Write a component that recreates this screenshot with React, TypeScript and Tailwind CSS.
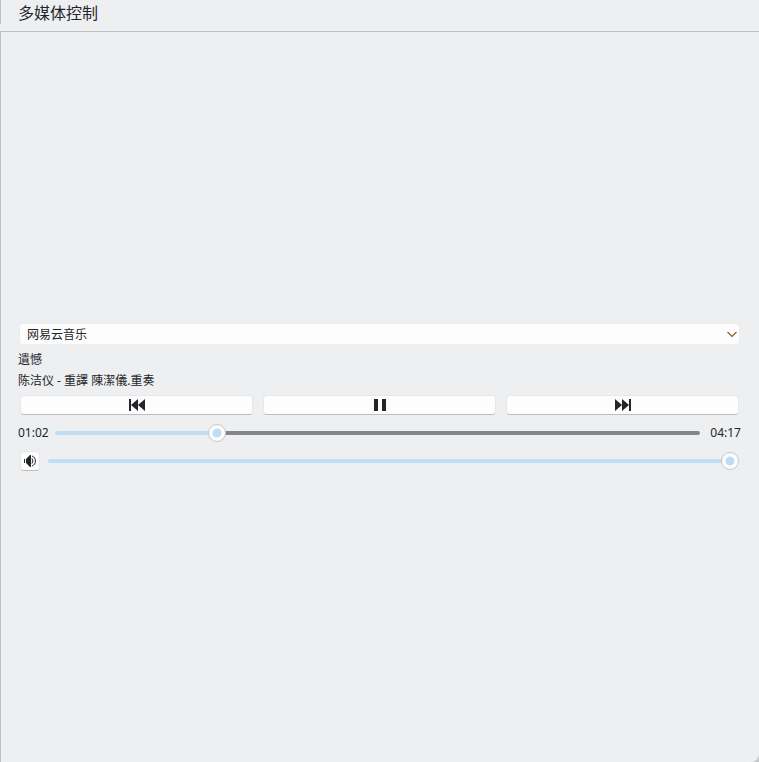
import { useState } from "react";

const DURATION = 257000;

const sliderClass =
  "h-[18px] min-w-0 flex-1 cursor-pointer appearance-none bg-transparent outline-none " +
  "[&::-webkit-slider-runnable-track]:h-1 [&::-webkit-slider-runnable-track]:rounded-xs [&::-webkit-slider-runnable-track]:[background:var(--track)] " +
  "[&::-webkit-slider-thumb]:-mt-[7px] [&::-webkit-slider-thumb]:size-[18px] [&::-webkit-slider-thumb]:appearance-none [&::-webkit-slider-thumb]:rounded-full " +
  "[&::-webkit-slider-thumb]:border [&::-webkit-slider-thumb]:border-[#c8c8ca] " +
  "[&::-webkit-slider-thumb]:bg-[radial-gradient(circle,#c0dcf3_4px,#fdfdfd_5px)]";

const buttonClass =
  "flex h-5 items-center justify-center rounded-sm border border-[#e6e7e9] border-b-[#bcbcbc] bg-[#fdfdfd] text-[#232629]";

function formatTime(ms: number) {
  const total = Math.floor(ms / 1000);
  const minutes = String(Math.floor(total / 60)).padStart(2, "0");
  const seconds = String(total % 60).padStart(2, "0");
  return `${minutes}:${seconds}`;
}

type SliderProps = {
  label: string;
  value: number;
  max: number;
  onChange: (value: number) => void;
};

function Slider({ label, value, max, onChange }: SliderProps) {
  const percent = (value / max) * 100;
  const track = `linear-gradient(to right, #c0dff5 ${percent}%, #868686 ${percent}%)`;

  return (
    <input
      type="range"
      aria-label={label}
      min={0}
      max={max}
      value={value}
      onChange={(e) => onChange(Number(e.target.value))}
      className={sliderClass}
      style={{ "--track": track } as React.CSSProperties}
    />
  );
}

function PreviousIcon() {
  return (
    <svg width="16" height="12" viewBox="0 0 16 12" fill="currentColor" aria-hidden="true">
      <path d="M0 0h2v12H0zM9 0v12L2 6zM16 0v12L9 6z" />
    </svg>
  );
}

function NextIcon() {
  return (
    <svg width="16" height="12" viewBox="0 0 16 12" fill="currentColor" aria-hidden="true">
      <path d="M14 0h2v12h-2zM0 0v12l7-6zM7 0v12l7-6z" />
    </svg>
  );
}

function PauseIcon() {
  return (
    <svg width="12" height="12" viewBox="0 0 12 12" fill="currentColor" aria-hidden="true">
      <path d="M0 0h4v12H0zM8 0h4v12H8z" />
    </svg>
  );
}

function VolumeIcon() {
  return (
    <svg width="12" height="12" viewBox="0 0 12 12" fill="none" aria-hidden="true">
      <path d="M0 4h1v4H0zM2 4l4-4h1v12H6L2 8z" fill="currentColor" />
      <path d="M8 3.5q1.8 2.5 0 5" stroke="currentColor" />
      <path d="M8 1c4.600 1.500 4.600 8.500 0 10" stroke="currentColor" />
    </svg>
  );
}

export default function App() {
  const [player, setPlayer] = useState("netease");
  const [position, setPosition] = useState(62700);
  const [volume, setVolume] = useState(100);

  return (
    <div className="bg-[#c6c7ca]">
      <div className="flex min-h-screen flex-col rounded-br-lg bg-[#eeeff1] font-['Noto_Sans','Noto_Sans_CJK_SC',sans-serif] text-xs text-[#232629]">
        <header className="mb-[7px] flex h-6 items-end border-l border-[#bfc0c5] px-[17px]">
          <h1 className="text-base leading-[22px]">多媒体控制</h1>
        </header>

        <main className="flex flex-1 flex-col justify-center rounded-br-lg border-t border-l border-[#bfc0c5] pr-[18px] pl-[17px]">
          <div className="relative mx-px">
            <select
              aria-label="播放器"
              value={player}
              onChange={(e) => setPlayer(e.target.value)}
              className="block h-[22px] w-full appearance-none rounded-sm border border-[#ebecee] bg-[#fdfdfd] px-[7px] pt-0.5 leading-[18px]"
            >
              <option value="netease">网易云音乐</option>
            </select>
            <svg
              className="pointer-events-none absolute top-2 right-[3px] text-[#8a5a2b]"
              width="10"
              height="7"
              viewBox="0 0 10 7"
              fill="none"
              aria-hidden="true"
            >
              <path d="M.5 1 5 5.500 9.500 1" stroke="currentColor" strokeWidth="1.200" />
            </svg>
          </div>

          <div className="my-1 leading-[21px]">
            <p>遺憾</p>
            <p>陈洁仪 - 重譯 陳潔儀.重奏</p>
          </div>

          <div className="mx-0.5 grid grid-cols-3 gap-2.5">
            <button type="button" aria-label="上一首" className={buttonClass}>
              <PreviousIcon />
            </button>
            <button type="button" aria-label="暂停" className={buttonClass}>
              <PauseIcon />
            </button>
            <button type="button" aria-label="下一首" className={buttonClass}>
              <NextIcon />
            </button>
          </div>

          <div className="mt-2 flex h-5 items-center">
            <span className="mr-1.5">{formatTime(position)}</span>
            <Slider label="播放进度" value={position} max={DURATION} onChange={setPosition} />
            <span className="ml-2.5">{formatTime(DURATION)}</span>
          </div>

          <div className="mx-0.5 mt-2 flex h-5 items-center gap-2">
            <button type="button" aria-label="静音" className={`${buttonClass} w-5`}>
              <VolumeIcon />
            </button>
            <Slider label="音量" value={volume} max={100} onChange={setVolume} />
          </div>
        </main>
      </div>
    </div>
  );
}
